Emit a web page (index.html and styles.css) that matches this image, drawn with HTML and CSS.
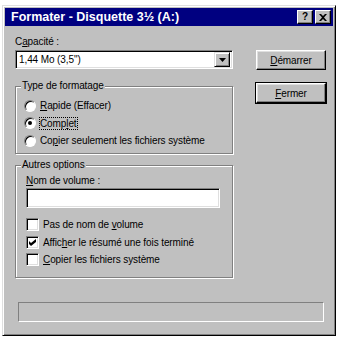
FILE: index.html
```html
<!DOCTYPE html>
<html lang="fr">
<head>
    <meta charset="UTF-8">
    <title>Formater - Disquette 3½ (A:)</title>
    <link rel="stylesheet" href="styles.css">
</head>
<body>
    <div class="window">
        <div class="title-bar">
            <span class="title">Formater - Disquette 3½ (A:)</span>
            <div class="title-buttons">
                <span class="tbtn help">?</span>
                <span class="tbtn close">
                    <svg width="8" height="7" viewBox="0 0 8 7"><path d="M0 0h2l2 2 2-2h2L5 3.5 8 7H6L4 5 2 7H0l3-3.5z" fill="#000"/></svg>
                </span>
            </div>
        </div>

        <div class="body">
            <div class="left">
                <div class="label">C<u>a</u>pacité :</div>
                <div class="combo">
                    <span class="combo-text">1,44 Mo (3,5")</span>
                    <span class="combo-btn">
                        <svg width="7" height="4" viewBox="0 0 7 4"><path d="M0 0h7L3.5 4z" fill="#000"/></svg>
                    </span>
                </div>

                <div class="group group-type">
                    <span class="group-title">Type de formatage</span>
                    <div class="opt"><span class="radio"></span><span><u>R</u>apide (Effacer)</span></div>
                    <div class="opt"><span class="radio checked"></span><span class="focus">Comp<u>l</u>et</span></div>
                    <div class="opt"><span class="radio"></span><span>Co<u>p</u>ier seulement les fichiers système</span></div>
                </div>

                <div class="group group-other">
                    <span class="group-title">Autres options</span>
                    <div class="label"><u>N</u>om de volume :</div>
                    <div class="textbox"></div>
                    <div class="checks">
                        <div class="opt"><span class="check"></span><span>Pas de nom de <u>v</u>olume</span></div>
                        <div class="opt"><span class="check">
                            <svg width="7" height="7" viewBox="0 0 7 7"><path d="M0 2l2 2 5-4v3L2 7 0 5z" fill="#000"/></svg>
                        </span><span>Affic<u>h</u>er le résumé une fois terminé</span></div>
                        <div class="opt"><span class="check"></span><span><u>C</u>opier les fichiers système</span></div>
                    </div>
                </div>
            </div>

            <div class="right">
                <button class="btn"><u>D</u>émarrer</button>
                <button class="btn default"><u>F</u>ermer</button>
            </div>
        </div>

        <div class="status"></div>
    </div>
</body>
</html>
```

FILE: styles.css
```css
body {
    margin: 0;
    background: #fff;
    font-family: "Liberation Sans", Arial, sans-serif;
    font-size: 10px;
    letter-spacing: -0.1px;
    color: #000;
}
.window {
    width: 334px;
    height: 331px;
    margin: 5px 0 0 2px;
    box-sizing: border-box;
    background: #c0c0c0;
    border: 1px solid;
    border-color: #dfdfdf #000 #000 #dfdfdf;
    box-shadow: inset 1px 1px #fff, inset -1px -1px #808080;
    padding: 2px;
    display: flex;
    flex-direction: column;
}
.title-bar {
    height: 18px;
    flex-shrink: 0;
    background: #000080;
    display: flex;
    align-items: center;
    justify-content: space-between;
    padding: 0 2px 0 6px;
}
.title {
    color: #fff;
    font-weight: bold;
    font-size: 12.5px;
    letter-spacing: 0;
}
.title-buttons {
    display: flex;
    gap: 2px;
}
.tbtn {
    width: 14px;
    height: 12px;
    background: #c0c0c0;
    border: 1px solid;
    border-color: #fff #000 #000 #fff;
    box-shadow: inset -1px -1px #808080;
    display: flex;
    align-items: center;
    justify-content: center;
    font-weight: bold;
    font-size: 10px;
    line-height: 1;
}
.body {
    display: flex;
    padding: 9px 7px 0 10px;
    gap: 23px;
}
.left {
    width: 220px;
}
.label {
    height: 14px;
    line-height: 14px;
}
.combo {
    margin-top: 1px;
    height: 19px;
    box-sizing: border-box;
    background: #fff;
    border: 1px solid;
    border-color: #808080 #fff #fff #808080;
    box-shadow: inset 1px 1px #000, inset -1px -1px #dfdfdf;
    display: flex;
    align-items: center;
    justify-content: space-between;
    padding: 2px;
}
.combo-text {
    padding-left: 1px;
}
.combo-btn {
    width: 14px;
    height: 13px;
    background: #c0c0c0;
    border: 1px solid;
    border-color: #dfdfdf #000 #000 #dfdfdf;
    box-shadow: inset 1px 1px #fff, inset -1px -1px #808080;
    display: flex;
    align-items: center;
    justify-content: center;
}
.group {
    position: relative;
    box-sizing: border-box;
    border: 1px solid #808080;
    box-shadow: 1px 1px #fff, inset 1px 1px #fff;
}
.group-title {
    position: absolute;
    top: -7px;
    left: 5px;
    line-height: 12px;
    padding: 0 1px;
    background: #c0c0c0;
}
.group-type {
    margin-top: 17px;
    height: 68px;
    padding: 10px 0 0 8px;
}
.group-other {
    margin-top: 11px;
    height: 113px;
    padding: 8px 12px 0 10px;
}
.opt {
    display: flex;
    align-items: center;
    gap: 4px;
    height: 17.5px;
}
.radio {
    width: 12px;
    height: 12px;
    box-sizing: border-box;
    border-radius: 50%;
    background: #fff;
    border: 1px solid;
    border-color: #808080 #fff #fff #808080;
    box-shadow: inset 1px 1px #000;
    display: flex;
    align-items: center;
    justify-content: center;
}
.radio.checked::after {
    content: "";
    width: 4px;
    height: 4px;
    border-radius: 50%;
    background: #000;
}
.focus {
    outline: 1px dotted #000;
}
.textbox {
    height: 20px;
    box-sizing: border-box;
    background: #fff;
    border: 1px solid;
    border-color: #808080 #fff #fff #808080;
    box-shadow: inset 1px 1px #000, inset -1px -1px #dfdfdf;
}
.checks {
    margin-top: 8px;
}
.check {
    width: 13px;
    height: 13px;
    box-sizing: border-box;
    background: #fff;
    border: 1px solid;
    border-color: #808080 #fff #fff #808080;
    box-shadow: inset 1px 1px #000, inset -1px -1px #dfdfdf;
    display: flex;
    align-items: center;
    justify-content: center;
}
.right {
    display: flex;
    flex-direction: column;
    gap: 13px;
    padding-top: 15px;
}
.btn {
    width: 70px;
    height: 20px;
    background: #c0c0c0;
    border: 1px solid;
    border-color: #fff #000 #000 #fff;
    box-shadow: inset -1px -1px #808080, inset 1px 1px #dfdfdf;
    font-family: inherit;
    font-size: 10px;
    letter-spacing: -0.1px;
    padding: 0;
    color: #000;
}
.btn.default {
    outline: 1px solid #000;
}
.status {
    margin: 24px 9px 0 13px;
    height: 20px;
    box-sizing: border-box;
    border: 1px solid;
    border-color: #808080 #fff #fff #808080;
}
```
